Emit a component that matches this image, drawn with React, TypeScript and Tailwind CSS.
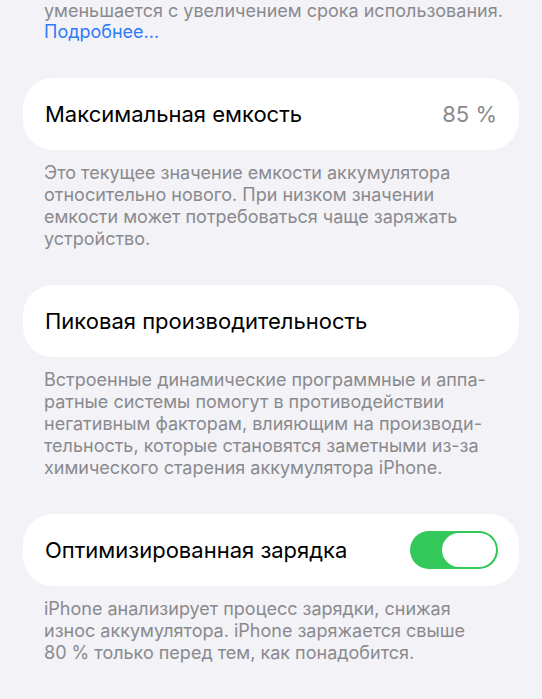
import React from 'react';

const font = { fontFamily: 'Inter, "Noto Sans", sans-serif' };

const Footer: React.FC<{ lines: string[]; className?: string }> = ({ lines, className = '' }) => (
  <div className={`px-[44px] text-[18px] leading-[22px] text-[#8a8a8e] ${className}`}>
    {lines.map((l, i) => (
      <div key={i} className="whitespace-nowrap">
        {l}
      </div>
    ))}
  </div>
);

const Card: React.FC<{ children: React.ReactNode; className?: string }> = ({ children, className = '' }) => (
  <div className={`mx-[23px] h-[72px] rounded-[30px] bg-white px-[22px] flex items-center justify-between ${className}`}>
    {children}
  </div>
);

const Toggle: React.FC = () => (
  <div className="w-[88px] h-[38px] rounded-full bg-[#34c759] p-[2px] flex justify-end">
    <div className="w-[54px] h-[34px] rounded-full bg-white" />
  </div>
);

export default function App() {
  return (
    <div className="w-[542px] h-[699px] overflow-hidden bg-[#f2f2f7]" style={font}>
      {/* tail of the previous section */}
      <div className="px-[44px] text-[18px] leading-[21px]">
        <div className="text-[#8a8a8e] whitespace-nowrap">уменьшается с увеличением срока использования.</div>
        <div className="text-[#2f7bf5]">Подробнее...</div>
      </div>

      <Card className="mt-[36px]">
        <span className="text-[22px] text-black">Максимальная емкость</span>
        <span className="text-[22px] text-[#8a8a8e]">85 %</span>
      </Card>
      <Footer
        className="pt-[12px]"
        lines={[
          'Это текущее значение емкости аккумулятора',
          'относительно нового. При низком значении',
          'емкости может потребоваться чаще заряжать',
          'устройство.',
        ]}
      />

      <Card className="mt-[35px]">
        <span className="text-[22px] text-black">Пиковая производительность</span>
      </Card>
      <Footer
        className="pt-[12px]"
        lines={[
          'Встроенные динамические программные и аппа-',
          'ратные системы помогут в противодействии',
          'негативным факторам, влияющим на производи-',
          'тельность, которые становятся заметными из-за',
          'химического старения аккумулятора iPhone.',
        ]}
      />

      <Card className="mt-[35px] pr-[21px]">
        <span className="text-[22px] text-black">Оптимизированная зарядка</span>
        <Toggle />
      </Card>
      <Footer
        className="pt-[12px]"
        lines={[
          'iPhone анализирует процесс зарядки, снижая',
          'износ аккумулятора. iPhone заряжается свыше',
          '80 % только перед тем, как понадобится.',
        ]}
      />
    </div>
  );
}
